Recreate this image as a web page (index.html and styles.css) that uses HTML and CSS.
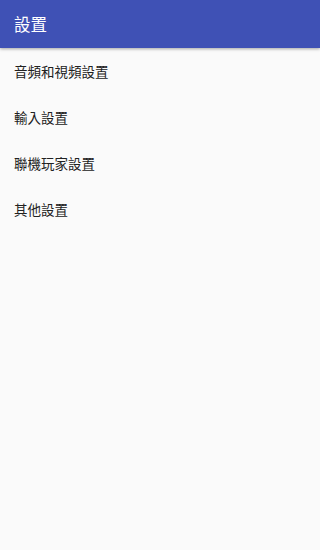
FILE: index.html
```html
<!DOCTYPE html>
<html lang="zh-Hant">
<head>
<meta charset="utf-8">
<link rel="stylesheet" href="styles.css">
</head>
<body>
<header class="appbar"><span class="title">設置</span></header>
<ul class="list">
  <li class="item">音頻和視頻設置</li>
  <li class="item">輸入設置</li>
  <li class="item">聯機玩家設置</li>
  <li class="item">其他設置</li>
</ul>
</body>
</html>
```
FILE: styles.css
```css
html, body {
  margin: 0;
  padding: 0;
  background: #fafafa;
  height: 100%;
  font-family: "Noto Sans CJK TC", "Noto Sans CJK SC", Roboto, sans-serif;
}
.appbar {
  height: 48px;
  background: #3f51b5;
  display: flex;
  align-items: center;
  padding: 0 14px;
  box-shadow: 0 1px 3px rgba(0,0,0,0.35);
  position: relative;
  z-index: 1;
}
.title {
  color: #ffffff;
  font-size: 16.5px;
  line-height: 1;
}
.list {
  list-style: none;
  margin: 0;
  padding: 0;
}
.item {
  height: 46px;
  display: flex;
  align-items: center;
  padding: 0 14px;
  font-size: 13.5px;
  color: #212121;
}
```
